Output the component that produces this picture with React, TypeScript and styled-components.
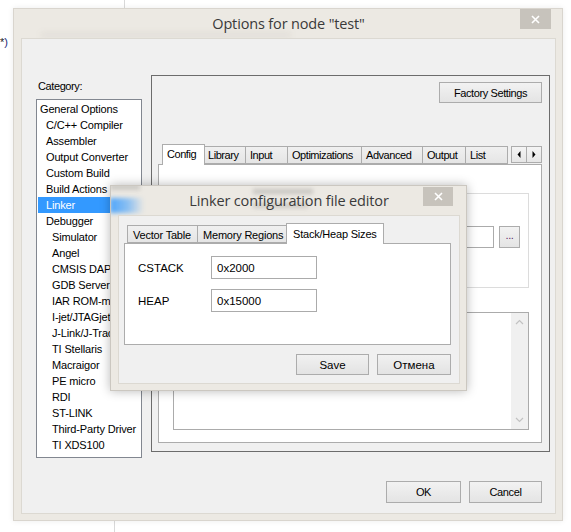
import React from 'react';
import styled, { createGlobalStyle } from 'styled-components';

const GlobalStyle = createGlobalStyle`
  html, body { margin: 0; padding: 0; background: #fff; }
  body { width: 571px; height: 532px; overflow: hidden; font-family: "Liberation Sans", Arial, sans-serif; font-size: 11px; color: #000; }
  * { box-sizing: border-box; }
`;

const Desktop = styled.div`
  position: relative;
  width: 571px;
  height: 532px;
  background: #fff;
  overflow: hidden;
`;

const BgLine = styled.div<{ $x: number; $y: number; $h: number }>`
  position: absolute;
  left: ${p => p.$x}px;
  top: ${p => p.$y}px;
  width: 1px;
  height: ${p => p.$h}px;
  background: #d9d9d9;
`;

const BgText = styled.div`
  position: absolute;
  left: 0;
  top: 36px;
  font-size: 11px;
  color: #222;
  span { color: #1c2a7a; }
`;

const Window = styled.div<{ $x: number; $y: number; $w: number; $h: number; $active?: boolean }>`
  position: absolute;
  z-index: ${p => (p.$active ? 2 : 1)};
  left: ${p => p.$x}px;
  top: ${p => p.$y}px;
  width: ${p => p.$w}px;
  height: ${p => p.$h}px;
  background: #ece9e3;
  border: 1px solid ${p => (p.$active ? '#cbc7c0' : '#d9d5ce')};
  box-shadow: ${p => (p.$active ? '0 0 10px rgba(0,0,0,0.28)' : '0 0 6px rgba(0,0,0,0.08)')};
  display: flex;
  flex-direction: column;
  padding: 0 6px 6px 7px;
  overflow: hidden;
`;

const TitleBar = styled.div`
  position: relative;
  height: 29px;
  flex: none;
  display: flex;
  align-items: center;
  justify-content: center;
  font-family: "Segoe UI", "Open Sans", "Noto Sans", sans-serif;
  font-size: 14.5px;
  color: #3a3a3a;
`;

const TitleText = styled.span`
  position: relative;
  z-index: 1;
  padding-bottom: 1px;
  letter-spacing: -0.15px;
`;

const CloseButton = styled.div<{ $w: number; $h: number; $top: number; $right: number }>`
  position: absolute;
  z-index: 1;
  top: ${p => p.$top}px;
  right: ${p => p.$right}px;
  width: ${p => p.$w}px;
  height: ${p => p.$h}px;
  background: #c7c3bc;
  display: flex;
  align-items: center;
  justify-content: center;
`;

const Smear = styled.div<{ $x: number; $y: number; $w: number; $h: number; $c: string; $b: number }>`
  position: absolute;
  left: ${p => p.$x}px;
  top: ${p => p.$y}px;
  width: ${p => p.$w}px;
  height: ${p => p.$h}px;
  background: ${p => p.$c};
  filter: blur(${p => p.$b}px);
  pointer-events: none;
`;

const ClientArea = styled.div`
  flex: 1;
  background: #f0f0f0;
  border: 1px solid #dcd9d2;
  display: flex;
  flex-direction: column;
  min-height: 0;
  position: relative;
  z-index: 1;
`;

/* ---------- Options dialog ---------- */

const OptionsClient = styled(ClientArea)`
  padding: 36px 5px 0 14px;
`;

const MainRow = styled.div`
  display: flex;
  align-items: flex-start;
  gap: 9px;
`;

const LeftCol = styled.div`
  width: 106px;
  flex: none;
  padding-top: 4px;
  display: flex;
  flex-direction: column;
`;

const ClassicLabel = styled.div`
  font-size: 11px;
  line-height: 14px;
  height: 14px;
  letter-spacing: -0.4px;
  padding-left: 2px;
`;

const CategoryList = styled.div`
  margin-top: 6px;
  height: 359px;
  background: #fff;
  border: 1px solid #828790;
  padding: 1px;
  display: flex;
  flex-direction: column;
`;

const CategoryItem = styled.div<{ $level: number; $selected?: boolean }>`
  height: 16px;
  line-height: 16px;
  white-space: nowrap;
  overflow: hidden;
  font-size: 11px;
  letter-spacing: -0.15px;
  padding-left: ${p => 2 + p.$level * 6}px;
  background: ${p => (p.$selected ? '#3399ff' : 'transparent')};
  color: ${p => (p.$selected ? '#fff' : '#000')};
`;

const Panel = styled.div`
  flex: 1;
  height: 377px;
  border: 1px solid #6c6c6c;
  display: flex;
  flex-direction: column;
  padding: 6px 7px 8px 6px;
`;

const PanelTop = styled.div`
  display: flex;
  justify-content: flex-end;
`;

const ClassicButton = styled.div<{ $w: number; $h?: number }>`
  width: ${p => p.$w}px;
  height: ${p => p.$h || 21}px;
  border: 1px solid #acacac;
  background: linear-gradient(#f2f2f2, #e4e4e4);
  display: flex;
  align-items: center;
  justify-content: center;
  font-size: 11px;
  letter-spacing: -0.4px;
  color: #000;
`;

const TabControl = styled.div<{ $gap: number }>`
  margin-top: ${p => p.$gap}px;
  flex: 1;
  display: flex;
  flex-direction: column;
  min-height: 0;
`;

const TabStrip = styled.div<{ $h: number; $pl: number }>`
  height: ${p => p.$h}px;
  display: flex;
  align-items: flex-end;
  padding-left: ${p => p.$pl}px;
  position: relative;
  z-index: 1;
  flex: none;
`;

const Tab = styled.div<{ $w: number; $selected?: boolean; $h: number; $condensed?: boolean }>`
  width: ${p => p.$w}px;
  height: ${p => p.$h}px;
  border: 1px solid #acacac;
  border-bottom: ${p => (p.$selected ? 'none' : '1px solid #acacac')};
  margin-left: ${p => (p.$selected ? -2 : -1)}px;
  margin-right: ${p => (p.$selected ? -1 : 0)}px;
  margin-bottom: ${p => (p.$selected ? -1 : 0)}px;
  background: ${p => (p.$selected ? '#fff' : 'linear-gradient(#f0f0f0, #e5e5e5)')};
  position: relative;
  z-index: ${p => (p.$selected ? 2 : 1)};
  font-size: 11px;
  letter-spacing: ${p => (p.$condensed ? '-0.45px' : '-0.15px')};
  line-height: 15px;
  padding: ${p => (p.$selected ? '2px 4px 0' : '1px 4px 0')};
  white-space: nowrap;
  overflow: hidden;
  &:first-child { margin-left: 0; }
`;

const TabScroller = styled.div`
  margin-left: auto;
  margin-bottom: 1px;
  display: flex;
`;

const ScrollArrow = styled.div`
  width: 16px;
  height: 17px;
  border: 1px solid #acacac;
  background: linear-gradient(#f4f4f4, #e6e6e6);
  display: flex;
  align-items: center;
  justify-content: center;
  & + & { margin-left: -1px; }
`;

const TabPage = styled.div<{ $pad: string }>`
  flex: 1;
  background: #fff;
  border: 1px solid #acacac;
  padding: ${p => p.$pad};
  display: flex;
  flex-direction: column;
  min-height: 0;
`;

const FixedTabPage = styled(TabPage)<{ $h: number }>`
  flex: none;
  height: ${p => p.$h}px;
`;

const GroupBox = styled.div`
  height: 95px;
  border: 1px solid #dcdcdc;
  display: flex;
  justify-content: flex-end;
  padding: 32px 8px 0 0;
  gap: 5px;
`;

const TextBox = styled.div<{ $w: number; $h: number }>`
  width: ${p => p.$w}px;
  height: ${p => p.$h}px;
  border: 1px solid #ababab;
  background: #fff;
  display: flex;
  align-items: center;
  padding-left: 5px;
  font-size: 11.5px;
`;

const DotsButton = styled(ClassicButton)`
  color: #5a2a6a;
  padding-bottom: 4px;
`;

const TextArea = styled.div`
  margin-top: 24px;
  height: 118px;
  border: 1px solid #ababab;
  display: flex;
  justify-content: flex-end;
`;

const VScroll = styled.div`
  width: 17px;
  background: #f0f0f0;
  display: flex;
  flex-direction: column;
  justify-content: space-between;
  align-items: center;
  padding: 6px 0;
`;

const Footer = styled.div<{ $mt: number; $pr: number; $gap: number; $mb?: number }>`
  margin-top: ${p => p.$mt}px;
  margin-bottom: ${p => p.$mb || 0}px;
  display: flex;
  justify-content: flex-end;
  gap: ${p => p.$gap}px;
  padding-right: ${p => p.$pr}px;
`;

/* ---------- Linker dialog ---------- */

const LinkerClient = styled(ClientArea)`
  padding: 7px 8px 0 5px;
`;

const ModernTab = styled(Tab)`
  letter-spacing: -0.2px;
  font-size: 11px;
  padding: ${p => (p.$selected ? '3px 5px 0 6px' : '2px 4px 0 5px')};
`;

const FieldRow = styled.div`
  display: flex;
  align-items: center;
  height: 23px;
  & + & { margin-top: 10px; }
`;

const FieldLabel = styled.div`
  width: 73px;
  font-size: 11.5px;
`;

const ModernButton = styled(ClassicButton)`
  letter-spacing: 0;
  font-size: 11.5px;
  background: linear-gradient(#f1f1f1, #e3e3e3);
`;

const CloseX = () => (
  <svg width="9" height="9" viewBox="0 0 9 9">
    <path d="M1 1 L8 8 M8 1 L1 8" stroke="#fff" strokeWidth="1.6" />
  </svg>
);

const Chevron = ({ up }: { up?: boolean }) => (
  <svg width="9" height="6" viewBox="0 0 9 6">
    <path d={up ? 'M1 5 L4.5 1.5 L8 5' : 'M1 1 L4.5 4.5 L8 1'} stroke="#c2c2c2" strokeWidth="1.2" fill="none" />
  </svg>
);

const Tri = ({ right }: { right?: boolean }) => (
  <svg width="4" height="7" viewBox="0 0 4 7">
    <path d={right ? 'M0.5 0 L3.5 3.5 L0.5 7 Z' : 'M3.5 0 L0.5 3.5 L3.5 7 Z'} fill="#000" />
  </svg>
);

const categories: [string, number][] = [
  ['General Options', 0],
  ['C/C++ Compiler', 1],
  ['Assembler', 1],
  ['Output Converter', 1],
  ['Custom Build', 1],
  ['Build Actions', 1],
  ['Linker', 1],
  ['Debugger', 1],
  ['Simulator', 2],
  ['Angel', 2],
  ['CMSIS DAP', 2],
  ['GDB Server', 2],
  ['IAR ROM-monitor', 2],
  ['I-jet/JTAGjet', 2],
  ['J-Link/J-Trace', 2],
  ['TI Stellaris', 2],
  ['Macraigor', 2],
  ['PE micro', 2],
  ['RDI', 2],
  ['ST-LINK', 2],
  ['Third-Party Driver', 2],
  ['TI XDS100', 2],
];

const optionTabs: [string, number][] = [
  ['Config', 43],
  ['Library', 43],
  ['Input', 43],
  ['Optimizations', 75],
  ['Advanced', 62],
  ['Output', 44],
  ['List', 43],
];

export default function App() {
  return (
    <Desktop>
      <GlobalStyle />
      <BgLine $x={124} $y={0} $h={8} />
      <BgLine $x={114} $y={520} $h={12} />
      <BgText>*<span>)</span></BgText>

      <Window $x={13} $y={8} $w={550} $h={513}>
        <TitleBar>
          <Smear $x={20} $y={24} $w={250} $h={4} $c="rgba(90,80,70,0.09)" $b={3} />
          <TitleText>Options for node "test"</TitleText>
          <CloseButton $w={31} $h={20} $top={0} $right={5}>
            <CloseX />
          </CloseButton>
        </TitleBar>
        <OptionsClient>
          <MainRow>
            <LeftCol>
              <ClassicLabel>Category:</ClassicLabel>
              <CategoryList>
                {categories.map(([name, lvl]) => (
                  <CategoryItem key={name} $level={lvl} $selected={name === 'Linker'}>
                    {name}
                  </CategoryItem>
                ))}
              </CategoryList>
            </LeftCol>
            <Panel>
              <PanelTop>
                <ClassicButton $w={103}>Factory Settings</ClassicButton>
              </PanelTop>
              <TabControl $gap={40}>
                <TabStrip $h={21} $pl={4}>
                  {optionTabs.map(([t, w], i) => (
                    <Tab key={t} $w={w} $h={i === 0 ? 21 : 18} $selected={i === 0} $condensed>
                      {t}
                    </Tab>
                  ))}
                  <TabScroller>
                    <ScrollArrow><Tri /></ScrollArrow>
                    <ScrollArrow><Tri right /></ScrollArrow>
                  </TabScroller>
                </TabStrip>
                <TabPage $pad="28px 12px 12px 14px">
                  <GroupBox>
                    <TextBox $w={300} $h={22} />
                    <DotsButton $w={21} $h={22}>...</DotsButton>
                  </GroupBox>
                  <TextArea>
                    <VScroll>
                      <Chevron up />
                      <Chevron />
                    </VScroll>
                  </TextArea>
                </TabPage>
              </TabControl>
            </Panel>
          </MainRow>
          <Footer $mt={23} $pr={8} $gap={8}>
            <ClassicButton $w={75} $h={22}>OK</ClassicButton>
            <ClassicButton $w={73} $h={22}>Cancel</ClassicButton>
          </Footer>
        </OptionsClient>
      </Window>

      <Window $x={110} $y={185} $w={357} $h={206} $active>
        <TitleBar>
          <Smear
            $x={-8}
            $y={12}
            $w={34}
            $h={15}
            $c="linear-gradient(to right, rgba(51,153,255,0.85), rgba(51,153,255,0.5) 55%, rgba(51,153,255,0))"
            $b={2}
          />
          <Smear $x={-8} $y={-2} $w={30} $h={6} $c="rgba(60,60,60,0.18)" $b={2} />
          <Smear $x={135} $y={3} $w={60} $h={5} $c="rgba(60,60,60,0.2)" $b={2} />
          <Smear $x={135} $y={17} $w={55} $h={5} $c="rgba(60,60,60,0.18)" $b={2} />
          <TitleText>Linker configuration file editor</TitleText>
          <CloseButton $w={30} $h={19} $top={1} $right={7}>
            <CloseX />
          </CloseButton>
        </TitleBar>
        <LinkerClient>
          <TabControl $gap={0}>
            <TabStrip $h={20} $pl={3}>
              <ModernTab $w={71} $h={18}>Vector Table</ModernTab>
              <ModernTab $w={91} $h={18}>Memory Regions</ModernTab>
              <ModernTab $w={98} $h={21} $selected>Stack/Heap Sizes</ModernTab>
            </TabStrip>
            <FixedTabPage $pad="12px 0 0 13px" $h={102}>
              <FieldRow>
                <FieldLabel>CSTACK</FieldLabel>
                <TextBox $w={106} $h={23}>0x2000</TextBox>
              </FieldRow>
              <FieldRow>
                <FieldLabel>HEAP</FieldLabel>
                <TextBox $w={106} $h={23}>0x15000</TextBox>
              </FieldRow>
            </FixedTabPage>
          </TabControl>
          <Footer $mt={8} $pr={-2} $gap={8} $mb={8}>
            <ModernButton $w={73} $h={21}>Save</ModernButton>
            <ModernButton $w={74} $h={21}>Отмена</ModernButton>
          </Footer>
        </LinkerClient>
      </Window>
    </Desktop>
  );
}
